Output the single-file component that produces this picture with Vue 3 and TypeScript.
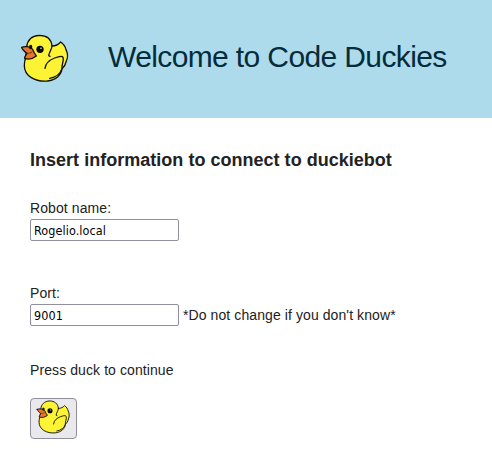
<script setup lang="ts">
import { ref } from 'vue'

const robotName = ref<string>('Rogelio.local')
const port = ref<string>('9001')
</script>

<template>
  <div class="page">
    <svg class="sprite" width="0" height="0" aria-hidden="true">
      <symbol id="duck" viewBox="30 27 150 150">
        <g stroke="#111" stroke-width="4" stroke-linecap="round" stroke-linejoin="round">
          <path
            fill="#fdf335"
            d="M50 67 C52 44 67 32 88 31 C110 31 124 43 126 63 C138 63 146 58 152 51 C161 57 166 65 168 74 C173 84 174 98 169 108 C167 118 162 126 156 131 C154 149 139 165 112 168 C76 171 43 153 43 122 C43 113 44 106 47 99 Z"
          />
          <path fill="none" d="M126 63 C125 75 118 80 116 92 L120 94" />
          <path fill="none" d="M105 130 C107 113 121 104 134 99 C145 95 156 91 159 97 C163 108 154 119 156 131 C151 147 137 157 119 160" />
          <path fill="#e9742b" d="M35 67 C44 63 61 64 68 73 C70 80 75 87 79 93 C69 101 55 104 44 100 C43 95 48 91 51 85 C44 80 37 75 35 67 Z" />
          <path fill="none" stroke="#7a3216" stroke-width="3" d="M51 85 C57 86 62 84 66 81" />
        </g>
        <ellipse cx="62" cy="66" rx="5" ry="7" fill="#111" />
        <circle cx="90" cy="73" r="11" fill="#080808" />
        <circle cx="93" cy="70" r="2.4" fill="#e5e5e5" />
      </symbol>
    </svg>

    <header class="banner">
      <svg class="logo"><use href="#duck" /></svg>
      <h1>Welcome to Code Duckies</h1>
    </header>

    <main class="content">
      <h2>Insert information to connect to duckiebot</h2>
      <div class="field">
        <label for="robot">Robot name:</label>
        <input id="robot" v-model="robotName" type="text" spellcheck="false" />
      </div>
      <div class="field port">
        <label for="port">Port:</label>
        <div class="row">
          <input id="port" v-model="port" type="text" />
          <span>*Do not change if you don't know*</span>
        </div>
      </div>
      <p>Press duck to continue</p>
      <button type="button" aria-label="Continue">
        <svg class="duck"><use href="#duck" /></svg>
      </button>
    </main>
  </div>
</template>

<style>
body {
  margin: 0;
  background: #fff;
}
</style>

<style scoped>
.page {
  height: 471px;
  overflow: hidden;
  color: #222;
  font: 14px/20px "Liberation Sans", Arial, sans-serif;
  letter-spacing: 0.09px;
}
.sprite {
  display: block;
}
.banner {
  display: flex;
  box-sizing: border-box;
  height: 118px;
  padding: 34px 0 0 20px;
  background: #addbeb;
}
.logo {
  width: 50px;
  height: 50px;
}
h1 {
  margin: 2px 0 0 38px;
  color: #042c3b;
  font-size: 30px;
  font-weight: 400;
  letter-spacing: -0.62px;
  line-height: 42px;
  white-space: nowrap;
}
.content {
  display: flex;
  flex-direction: column;
  align-items: flex-start;
  padding: 30px 30px 0;
}
h2 {
  margin: 0 0 26px;
  font-size: 18px;
  font-weight: 700;
  letter-spacing: 0.02px;
  line-height: 24px;
}
.field {
  display: flex;
  flex-direction: column;
}
.field.port {
  margin-top: 42px;
}
.row {
  display: flex;
  gap: 4px;
}
.row span {
  line-height: 24px;
}
input {
  box-sizing: border-box;
  width: 149px;
  height: 22px;
  margin: 1px 0 0;
  padding: 0 3px;
  border: 1px solid #8f8f9d;
  border-radius: 2px;
  background: #fff;
  color: #000;
  font: 12.5px "DejaVu Sans Condensed", "Noto Sans", sans-serif;
  letter-spacing: 0.08px;
}
p {
  margin: 33px 0 18px;
}
.row {
  height: 24px;
}
button {
  display: flex;
  box-sizing: border-box;
  width: 47px;
  height: 41px;
  padding: 1px 5px;
  border: 1px solid #8f8f9d;
  border-radius: 4px;
  background: #e9e9ed;
}
.duck {
  width: 35px;
  height: 35px;
}
</style>
